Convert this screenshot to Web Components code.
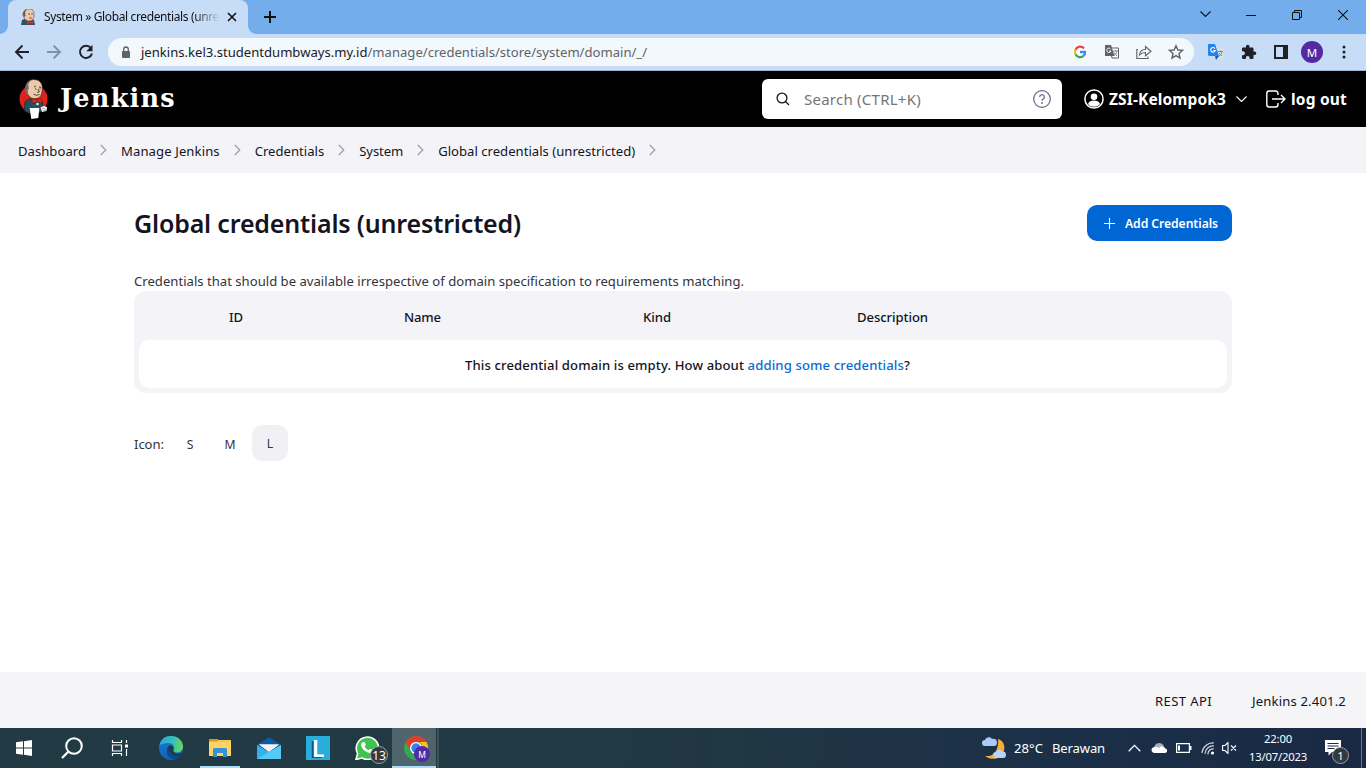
<!DOCTYPE html>
<html lang="en">
<head>
<meta charset="utf-8">
<title>Global credentials (unrestricted) [Jenkins]</title>
<style>
html,body{margin:0;height:100%}
body{font-family:"Noto Sans","Open Sans",sans-serif;color:#14141f;background:#fff;overflow:hidden}
</style>
</head>
<body>
<desktop-screen></desktop-screen>
<script>
const define = (name, css, html) => {
  const t = document.createElement('template');
  t.innerHTML = `<style>*{box-sizing:border-box}:host{display:block;box-sizing:border-box}${css}</style>${html}`;
  customElements.define(name, class extends HTMLElement {
    constructor() {
      super();
      this.attachShadow({ mode: 'open' }).append(t.content.cloneNode(true));
    }
  });
};

const butler = `<circle cx="14.500" cy="20" r="14" fill="#dd231d"/>
<path d="M6 23l4-3 8 1 5 1 1.500 9-4 2.500-10 1L5.500 32z" fill="#24505e" stroke="#10222b" stroke-width=".7"/>
<path d="M7.500 8C7.500 3 11 .5 15 .5c5.500 0 8.300 3.500 8.300 8.500 0 5-.8 9.500-5.800 10.500C12 20.500 9 17 8 13z" fill="#eccaa9" stroke="#302420" stroke-width=".7"/>
<path d="M7.800 15.500C4.500 10 6 3 12 1L9.200 5l.6 5-1.300 1 .6 5z" fill="#6d6a69"/>
<path d="M15 8l2-1M20 8l2 .5M16 10h1.500M20.500 10h1M19 10l1.300 3-2 .4M14.500 15c2 1.600 4 1.400 6 .4" stroke="#40302a" stroke-width=".9" fill="none"/>
<path d="M13 19.500l5 1.700 4.500-1.700v5l-4-2-5 2z" fill="#ea2a22" stroke="#45100e" stroke-width=".4"/><circle cx="18.500" cy="25" r="1.300" fill="#dcebef"/>
<path d="M10.700 29h9.600l-1 10-7 1z" fill="#fff"/><path d="M21.500 28.500l3-1.500 3.500 1-.5 4-4.500 1z" fill="#f5f5f5"/><path d="M23 29l3 1M24 32l3-1" stroke="#666" stroke-width=".5"/>`;
const chromeBall = `<circle cx="12" cy="12" r="12" fill="#34a853"/><path d="M12 0a12 12 0 0 1 10.400 6H12a6 6 0 0 0-5.400 8.500L1.600 6A12 12 0 0 1 12 0z" fill="#e33b2e"/><path d="M22.400 6A12 12 0 0 1 12 24l5.200-9A6 6 0 0 0 15 6z" fill="#fbc116"/><circle cx="12" cy="12" r="6" fill="#fff"/><circle cx="12" cy="12" r="4.700" fill="#3b7ded"/>`;
const line = (d, w = 1) => `<path d="${d}" fill="none" stroke="currentColor" stroke-width="${w}"/>`;
const icons = {
  favicon: [16, 16, `<path d="M1 16l1-5 5-2 7 2 1 5z" fill="#335061"/><path d="M4 3C5 0 7 0 9 0c4 0 5 2 5 5s0 6-4 7C6 12 4 10 4 8 2 6 3 4 4 3z" fill="#edc9a7" stroke="#51443c" stroke-width=".6"/><path d="M4 8C2 5 3 1 7 .5L5 3l.500 4z" fill="#5f5d5c"/><path d="M8 5h2m1 0h2M9 9h3" stroke="#5c4337" stroke-width=".8"/><path d="M7 12l3 1 3-1v3l-3-1-3 1z" fill="#dc3128"/>`],
  butler: [29, 40, butler],
  x: [10, 10, line('M1 1l8 8M9 1l-8 8', 1.600)],
  plus: [12, 12, line('M6 0v12M0 6h12', 2)],
  down: [11, 6, line('M.5.500l5 5 5-5', 1.100)],
  min: [10, 10, line('M0 5.500h10')],
  restore: [10, 10, line('M.5 2.500h7v7h-7zM2.500 2.500v-2h7v7h-2')],
  close: [10, 10, line('M0 0l10 10M10 0L0 10', 1.100)],
  back: [16, 16, line('M15 8H2M8.500 1.500L2 8l6.500 6.500', 1.900)],
  fwd: [16, 16, line('M1 8h13M7.500 1.500L14 8l-6.500 6.500', 1.900)],
  reload: [16, 16, line('M13 4.200A6.100 6.100 0 1 0 14 9.500', 1.900) + '<path d="M14.500.800v6.400H8.300z" fill="currentColor"/>'],
  lock: [10, 13, '<rect x="1" y="5" width="8" height="7" rx="1" fill="#5f6368"/><path d="M2.700 5V3.300a2.300 2.300 0 0 1 4.600 0V5" fill="none" stroke="#5f6368" stroke-width="1.300"/>'],
  g: [14, 14, '<circle cx="7" cy="7" r="7" fill="#fff"/><g fill="none" stroke-width="2.300"><path d="M11 3.400A5.100 5.100 0 0 0 2.500 4.700" stroke="#ea4335"/><path d="M2.500 4.700a5.100 5.100 0 0 0 0 4.600" stroke="#fbbc05"/><path d="M2.500 9.300a5.100 5.100 0 0 0 7.900 1.600" stroke="#34a853"/><path d="M10.400 10.900A5 5 0 0 0 12.100 7H7" stroke="#4285f4"/></g>'],
  trans: [16, 16, '<path d="M6 4h8.500v10H8z" fill="#fff" stroke="#5f6368"/><path d="M1 1h6l3.500 11H1z" fill="#5f6368"/><path d="M6.800 5.200A2.200 2.200 0 1 0 7 7H5" fill="none" stroke="#fff"/><path d="M9 7h5M11.500 6v1M13 7.500c-.500 2-2 3.500-3.500 4M10 8.500l3 3.500" stroke="#5f6368" stroke-width=".8" fill="none"/>'],
  share: [16, 16, line('M2 5.500H.8v9H12V12.500M3.500 11c.500-4 2.500-5.500 6-5.500V2.500l5.500 4.800-5.500 4.500V8.500C6.500 8.500 5 9.200 3.500 11z', 1.100)],
  star: [16, 16, line('M8 1.800l1.900 4.200 4.600.400-3.500 3.100 1 4.500-4-2.400-4 2.400 1-4.500-3.500-3.100 4.600-.400z', 1.400)],
  gtrans: [16, 16, '<path d="M7 4h8.500v11H8z" fill="#dce0e3"/><path d="M0 0h7l4 12H1L0 11z" fill="#2384f2"/><path d="M7 12h4l-3 4z" fill="#1455bf"/><path d="M7 4.600A2.300 2.300 0 1 0 7.200 6.500H5.300" fill="none" stroke="#fff" stroke-width="1.100"/><path d="M10 7.500h5M12.500 6.500v1M14 8c-.500 2-1.500 3-3 4M11 9l3 3" stroke="#6e7b88" stroke-width=".9" fill="none"/>'],
  puzzle: [16, 16, '<path d="M13.500 7.500h-1V4.700c0-.700-.500-1.200-1.200-1.200H8.500v-1a1.800 1.800 0 0 0-3.600 0v1H2.200C1.500 3.500 1 4 1 4.700v2.600h1a1.900 1.900 0 0 1 0 3.900H1v2.600c0 .700.500 1.200 1.200 1.200h2.600v-1a1.900 1.900 0 0 1 3.900 0v1h2.600c.700 0 1.200-.500 1.200-1.200v-2.700h1a1.800 1.800 0 0 0 0-3.600z" fill="#1f2124"/>'],
  side: [14, 14, '<path d="M1 1h12v12H1z" fill="none" stroke="#202124" stroke-width="2"/><path d="M9 1h4v12H9z" fill="#202124"/>'],
  dots: [4, 14, '<g fill="#202124"><circle cx="2" cy="2" r="1.500"/><circle cx="2" cy="7" r="1.500"/><circle cx="2" cy="12" r="1.500"/></g>'],
  search: [14, 14, '<circle cx="6" cy="6" r="4.900" fill="none" stroke="currentColor" stroke-width="1.300"/>' + line('M9.500 9.500l3.500 3.500', 1.300)],
  help: [18, 18, '<circle cx="9" cy="9" r="8.300" fill="none" stroke="#676789" stroke-width="1.200"/><path d="M6.700 7a2.300 2.300 0 1 1 3.500 2c-.800.500-1.200.900-1.200 1.800" fill="none" stroke="#676789" stroke-width="1.300"/><circle cx="9" cy="13" r=".9" fill="#676789"/>'],
  user: [20, 20, '<circle cx="10" cy="10" r="9.100" fill="none" stroke="#fff" stroke-width="1.500"/><circle cx="10" cy="7.800" r="3.300" fill="#fff"/><path d="M4 15c1-3 3-3.500 6-3.500s5 .500 6 3.500c-1 1.500-3 2.800-6 2.800S5 16.500 4 15z" fill="#fff"/>'],
  logout: [20, 18, line('M12 5V3.500c0-1.500-.800-2.500-2.500-2.500H3.200C1.700 1 .8 2 .8 3.500v11C.8 16 1.700 17 3.200 17h6.300c1.700 0 2.500-1 2.500-2.500V13M6 9h13M15 5l4 4-4 4', 1.400)],
  crumb: [7, 12, line('M.8 1l5 5-5 5', 1.200)],
  add: [11, 11, line('M5.500 0v11M0 5.500h11', 1.100)],
  win: [16, 16, '<path d="M0 2.300L7 1.300v6.200H0zM8 1.200L16 0v7.500H8zM0 8.500h7v6.200l-7-1zM8 8.500h8V16l-8-1.200z" fill="#fff"/>'],
  find: [22, 22, '<circle cx="13" cy="9" r="7.800" fill="none" stroke="#fff" stroke-width="2"/><path d="M7.500 14.500L1 21" stroke="#fff" stroke-width="2.300"/>'],
  tasks: [18, 16, line('M1.500 0v2.500h9V0M1.500 5h9v6h-9zM1.500 16v-2.500h9V16M15.500 0v3M15.500 9v7', 1.200) + '<path d="M14 4.500h3v3h-3z" fill="#fff"/>'],
  edge: [24, 24, '<defs><linearGradient id="a"><stop stop-color="#2aa6dd"/><stop offset=".6" stop-color="#35c2b5"/><stop offset="1" stop-color="#72d84c"/></linearGradient><linearGradient id="b" x2="0" y2="1"><stop stop-color="#127fce"/><stop offset="1" stop-color="#155fba"/></linearGradient></defs><circle cx="12" cy="12" r="12" fill="url(#b)"/><path d="M.5 9C2 3 6 0 12 0c7 0 12 5 12 10.500 0 4-3 6-6.500 6-3 0-4-1.500-3-3 2-3-1-6.500-5-6.500C5 7 1.500 9 .5 9z" fill="url(#a)"/><path d="M9.500 10C5 15 9 23 16 23.500c3-1 5-2.500 6.500-5C17 21.500 9.500 18 9.500 10z" fill="#0c4a91"/><path d="M9.500 10c-.500 6 4 10.500 9 10.300 2-.300 3-.800 4-1.800 1-1.500 0-2-1.500-1.300-4 1.200-7.500-1-6.500-4 .5-2-2.500-5.200-5-3.200z" fill="#213b45"/>'],
  folder: [22, 20, '<path d="M0 2h22v16H0z" fill="#fcd364"/><path d="M0 1h9v2.500H0z" fill="#dc9b0b"/><path d="M10 2.500h12V4H10z" fill="#f9c33a"/><path d="M4 19v-8l1-1h12l1 1v8h-4v-4H8v4z" fill="#3b91d8"/>'],
  mail: [24, 22, '<path d="M0 8L12 0l12 8v4H0z" fill="#0b5ca8"/><path d="M0 8l12 7L24 8v14H0z" fill="#33b1ed"/><path d="M2 7.500h20L12 15z" fill="#f4f4f4"/><path d="M24 8L0 22h24z" fill="#56c9f6"/><path d="M2 7.500h20L12 14.500z" fill="#f4f4f4"/>'],
  weather: [25, 23, '<path d="M16 2c6 2 8 8 5 14-3 6-11 8-18 3 9 1 14-6 13-17z" fill="#f6ae37"/><path d="M3 9a3 3 0 0 1 0-6C4-.5 9-.5 10 2c3-1 5 1 5 3.500S14 9 12 9z" fill="#a9cbf5"/><path d="M14 21a3 3 0 0 1 0-6c1-3 5-3 6-.5 3-.500 4 1 4 3.500 0 2-1 3-3 3z" fill="#b7d5fa"/>'],
  up: [13, 8, line('M.7 7.200l5.800-5.800 5.800 5.800', 1.300)],
  cloud: [16, 10, '<path d="M4 7C2 3 5 0 8 0c2 0 4 1 5 3z" fill="#a8adb8"/><path d="M3 10a3 3 0 0 1-.500-5.800C5 3 6.500 4 8 5c2-3 6-2 6 .5 3 0 3 4.500 0 4.500z" fill="#fff"/>'],
  battery: [16, 10, line('M.6.600h12.800v8.800H.6z', 1.200) + '<path d="M2 2.500h2v5H2zM14 3h1.500v4H14z" fill="#fff"/>'],
  wifi: [14, 13, '<g fill="none" stroke="#d0d4dc" stroke-width="1.200"><path d="M1 11A11 11 0 0 1 13 1M4 12a8 8 0 0 1 9-8M7 12.500A5 5 0 0 1 13 7"/></g><circle cx="11.500" cy="11" r="1.600" fill="#fff"/>'],
  mute: [15, 12, line('M.6 3.500h2.400l3-3v11l-3-3H.6zM9 3.500l5 5M14 3.500l-5 5', 1.100)],
  note: [16, 16, '<path d="M0 0h16v12H7l-3.500 3.500V12H0z" fill="#fff"/><path d="M2.500 3.500h11M2.500 6h11M2.500 8.500h7" stroke="#1b2c46"/>'],
  whats: [24, 24, '<path d="M1 23.500l1.600-6A11.200 11.200 0 1 1 7 22z" fill="#3fc351" stroke="#fff" stroke-width="1.600"/><path d="M8 6l1.800.300 1 2.700-1.200 1.500c1 2 2.200 3 4 3.700l1.400-1.500 2.700 1.300c.3 2-1.700 3.300-3.300 3-4-.8-8-4.800-8.300-8C6 7.500 7 6.300 8 6z" fill="#fff"/>'],
  chrome: [24, 24, chromeBall]
};

customElements.define('ui-icon', class extends HTMLElement {
  constructor() {
    super();
    const [w, h, body] = icons[this.getAttribute('name')];
    this.attachShadow({ mode: 'open' }).innerHTML =
      `<style>:host{display:block;flex:none;width:${w}px;height:${h}px}svg{display:block}</style><svg width="${w}" height="${h}" viewBox="0 0 ${w} ${h}">${body}</svg>`;
  }
});

define('browser-tabs', `
:host{height:34px;background:#74adeb;display:flex;align-items:center;color:#111}
.tab{margin-left:8px;width:240px;height:34px;border-radius:8px 8px 0 0;background:#c7dcf7;display:flex;align-items:center;padding-left:12px;flex:none;position:relative}
.tab:before,.tab:after{content:"";position:absolute;bottom:0;width:8px;height:8px}
.tab:before{left:-8px;background:radial-gradient(circle at 0 0,transparent 7.500px,#c7dcf7 8px)}
.tab:after{right:-8px;background:radial-gradient(circle at 100% 0,transparent 7.500px,#c7dcf7 8px)}
.name{margin:-2px 0 0 8px;width:176px;overflow:hidden;font-size:12px;white-space:nowrap;-webkit-mask:linear-gradient(90deg,#000 150px,transparent)}
`, `<div class="tab"><ui-icon name="favicon"></ui-icon><div class="name"><fit-text w="175">System » Global credentials (unre</fit-text></div><ui-icon name="x" style="margin-left:7px"></ui-icon></div>
<ui-icon name="plus" style="margin-left:16px"></ui-icon><span style="flex:1"></span>
<ui-icon name="down" style="margin-bottom:6px"></ui-icon><ui-icon name="min" style="margin:0 0 4px 35px"></ui-icon><ui-icon name="restore" style="margin:0 0 5px 36px"></ui-icon><ui-icon name="close" style="margin:0 18px 5px 36px"></ui-icon>`);

define('browser-toolbar', `
:host{height:37px;background:#c7dcf7;border-bottom:1px solid #9db7d8;display:flex;align-items:center;padding-left:14px;color:#202124}
.pill{margin-left:14px;width:1086px;height:28px;border-radius:14px;background:#f3f8fd;display:flex;align-items:center;padding:0 10px 0 13px;color:#5f6368}
.url{margin-left:10px;font-size:13.100px;color:#5f6368}b{font-weight:400;color:#202124}
.me{margin-left:13px;width:22px;height:22px;border-radius:50%;background:#5529a6;color:#fff;display:grid;place-items:center;font-size:11.500px}
`, `<ui-icon name="back"></ui-icon><ui-icon name="fwd" style="margin-left:16px;color:#8291aa"></ui-icon><ui-icon name="reload" style="margin-left:16px"></ui-icon>
<div class="pill"><ui-icon name="lock"></ui-icon><div class="url"><fit-text w="506"><b>jenkins.kel3.studentdumbways.my.id</b>/manage/credentials/store/system/domain/_/</fit-text></div><span style="flex:1"></span><ui-icon name="g"></ui-icon><ui-icon name="trans" style="margin-left:17px"></ui-icon><ui-icon name="share" style="margin-left:16px"></ui-icon><ui-icon name="star" style="margin-left:16px"></ui-icon></div>
<ui-icon name="gtrans" style="margin-left:14px"></ui-icon><ui-icon name="puzzle" style="margin-left:17px"></ui-icon><ui-icon name="side" style="margin-left:17px"></ui-icon><div class="me">M</div><ui-icon name="dots" style="margin-left:19px"></ui-icon>`);

define('jenkins-header', `
:host{height:56px;background:#000;display:flex;align-items:center;padding-left:19px;color:#fff;font-weight:700;font-size:15.500px}
.brand{margin:0 0 3px 12px;font:700 25.500px/32px "DejaVu Serif",serif}
.search{margin-left:auto;width:300px;height:40px;border-radius:6px;background:#fff;color:#14141f;display:flex;align-items:center;padding:0 11px 0 14px}
.search fit-text{margin-left:14px;font-weight:400;color:#757575;margin-right:auto;font-size:15px}
`, `<ui-icon name="butler"></ui-icon><div class="brand"><fit-text w="116">Jenkins</fit-text></div>
<div class="search"><ui-icon name="search"></ui-icon><fit-text w="117">Search (CTRL+K)</fit-text><ui-icon name="help"></ui-icon></div>
<ui-icon name="user" style="margin-left:22px"></ui-icon><fit-text w="117" style="margin-left:5px">ZSI-Kelompok3</fit-text><ui-icon name="down" style="margin-left:10px"></ui-icon><ui-icon name="logout" style="margin-left:19px"></ui-icon><fit-text w="56" style="margin:0 19px 0 5px">log out</fit-text>`);

define('jenkins-breadcrumbs', `
:host{height:46px;background:#f4f4f8;display:flex;align-items:center;padding:2px 0 0 18px;font-size:13.100px;font-weight:450}
ui-icon{color:#9b9bb1;margin:0 14px;position:relative;top:-1px}
`, `<fit-text w="68">Dashboard</fit-text><ui-icon name="crumb"></ui-icon><fit-text w="98.700">Manage Jenkins</fit-text><ui-icon name="crumb"></ui-icon><fit-text w="69.500">Credentials</fit-text><ui-icon name="crumb"></ui-icon><fit-text w="44">System</fit-text><ui-icon name="crumb"></ui-icon><fit-text w="197">Global credentials (unrestricted)</fit-text><ui-icon name="crumb"></ui-icon>`);

define('credentials-table', `
:host{height:102px;border-radius:12px;background:#f3f3f8;padding:0 5px 5px;font-size:13.100px;font-weight:500;color:#14141f}
.head{height:49px;display:flex;align-items:center;padding:3px 0 0 90px}
.empty{height:48px;border-radius:10px;background:#fff;display:flex;align-items:center;padding:2px 0 0 326px}
a{color:#0b6bd3}
`, `<div class="head"><fit-text w="14">ID</fit-text><fit-text w="37" style="margin-left:161px">Name</fit-text><fit-text w="28" style="margin-left:202px">Kind</fit-text><fit-text w="71" style="margin-left:186px">Description</fit-text></div>
<div class="empty"><fit-text w="445">This credential domain is empty. How about <a>adding some credentials</a>?</fit-text></div>`);

define('icon-size', `
:host{display:flex;align-items:center;margin-top:32px;font-size:13.100px;height:36px;padding-top:0;color:#333340}
.o{width:36px;height:36px;margin-right:4px;display:grid;place-items:center;border-radius:10px;font-size:12.200px;font-weight:450;padding-top:2px}
.on{background:#f0f0f5;padding:0}
`, `<fit-text w="30" style="margin:0 8px 0 0;padding-top:2px">Icon:</fit-text><div class="o">S</div><div class="o">M</div><div class="o on">L</div>`);

define('credentials-page', `
:host{height:499px;padding:32px 134px 0;background:#fff}
.bar{display:flex;height:36px;align-items:center;justify-content:space-between}
h1{margin:0;font-size:25px;line-height:36px;font-weight:650}
.btn{width:145px;height:36px;border-radius:10px;background:#0066d4;color:#fff;display:flex;align-items:center;padding-left:17px;font-size:12.200px;font-weight:650}
p{margin:31px 0 0;font-size:13.100px;line-height:19px;color:#333340}
`, `<div class="bar"><h1><fit-text w="387">Global credentials (unrestricted)</fit-text></h1><div class="btn"><ui-icon name="add"></ui-icon><fit-text w="93" style="margin-left:10px">Add Credentials</fit-text></div></div>
<p><fit-text w="610">Credentials that should be available irrespective of domain specification to requirements matching.</fit-text></p>
<credentials-table></credentials-table><icon-size></icon-size>`);

define('jenkins-footer', `
:host{height:56px;background:#f5f5f8;display:flex;align-items:center;justify-content:flex-end;gap:40px;padding:2px 20px 0 0;font-size:13.100px;font-weight:450}
`, `<fit-text w="57">REST API</fit-text><fit-text w="94">Jenkins 2.401.2</fit-text>`);

define('win-taskbar', `
:host{height:40px;background:linear-gradient(90deg,#213a43 0,#213942 45%,#1b2f48 80%,#1a2943);display:flex;align-items:center;color:#fff;font-size:13.100px}
.app{height:40px;flex:none;display:grid;place-items:center;position:relative}
.run{border-bottom:2px solid #a9dcfb;padding-top:2px}
.chrome{width:44px;background:#50646b;margin-left:3px;padding-left:4px}
.badge{position:absolute;border-radius:50%;display:grid;place-items:center;background:#343941;border:1px solid #9a9fa3}
.clock{margin-left:12px;width:58px;text-align:center;font-size:11.300px;line-height:18px;display:grid;justify-items:center}
`, `<ui-icon name="win" style="margin-left:16px"></ui-icon><ui-icon name="find" style="margin-left:29px"></ui-icon><ui-icon name="tasks" style="margin-left:28px"></ui-icon><ui-icon name="edge" style="margin-left:30px"></ui-icon>
<div class="app run" style="width:40px;margin-left:17px"><ui-icon name="folder"></ui-icon></div><ui-icon name="mail" style="margin-left:17px"></ui-icon>
<div style="margin-left:25px;width:24px;height:24px;flex:none;background:#27aedb;display:grid;place-items:center;font:700 23px/24px Lato,sans-serif;text-shadow:-2px 1px #0a568e">L</div>
<div class="app" style="margin-left:25px;width:34px;justify-content:start"><ui-icon name="whats"></ui-icon><span class="badge" style="width:18px;height:18px;left:15px;top:18px;font-size:12px">13</span></div>
<div class="app run chrome"><ui-icon name="chrome"></ui-icon><span class="badge" style="width:16px;height:16px;left:22px;top:18px;background:#532aa5;border:0;font-size:8.500px">M</span></div><div style="width:3px;height:40px;background:#3b5058;border-left:1px solid #24383f"></div>
<ui-icon name="weather" style="margin-left:auto"></ui-icon><fit-text w="29" style="margin-left:7px">28°C</fit-text><fit-text w="53" style="margin-left:9px">Berawan</fit-text>
<ui-icon name="up" style="margin-left:23px"></ui-icon><ui-icon name="cloud" style="margin-left:10px"></ui-icon><ui-icon name="battery" style="margin-left:9px"></ui-icon><ui-icon name="wifi" style="margin-left:9px"></ui-icon><ui-icon name="mute" style="margin-left:7px"></ui-icon>
<div class="clock"><fit-text w="28">22:00</fit-text><fit-text w="58">13/07/2023</fit-text></div>
<div class="app" style="margin-left:18px;width:24px;justify-content:start"><ui-icon name="note"></ui-icon><span class="badge" style="width:17px;height:17px;left:7px;top:19px;font-size:11.500px">1</span></div><div style="margin:0 4px 0 12px;width:1px;height:40px;background:#68758a"></div>`);

define('desktop-screen', `:host{width:1366px;height:768px}`,
  `<browser-tabs></browser-tabs><browser-toolbar></browser-toolbar><jenkins-header></jenkins-header><jenkins-breadcrumbs></jenkins-breadcrumbs><credentials-page></credentials-page><jenkins-footer></jenkins-footer><win-taskbar></win-taskbar>`);

/* Inline label whose tracking is adjusted to fill the width given in "w". */
customElements.define('fit-text', class extends HTMLElement {
  constructor() {
    super();
    this.attachShadow({ mode: 'open' }).innerHTML =
      '<style>:host{display:block;flex:none;white-space:nowrap}span{display:inline-block;white-space:nowrap}</style><span><slot></slot></span>';
  }
  connectedCallback() {
    const w = +this.getAttribute('w');
    const span = this.shadowRoot.querySelector('span');
    this.style.width = w + 'px';
    const free = w - span.getBoundingClientRect().width;
    span.style.letterSpacing = free / this.textContent.length + 'px';
  }
});
</script>
</body>
</html>
